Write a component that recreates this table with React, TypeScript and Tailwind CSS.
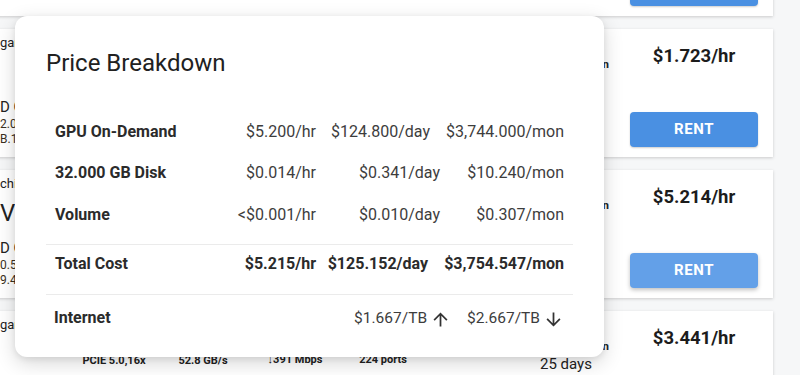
import React from "react";

type Stat = { label: string; value: string; high?: boolean };

type Offer = {
  id: string;
  host: string;
  title: string;
  titleIndent?: boolean;
  cpu: string;
  line4: string;
  line5: string;
  price: string;
  hover?: boolean;
  stats: Stat[];
  duration: string;
};

const OFFERS: Offer[] = [
  {
    id: "o1",
    host: "",
    title: "",
    cpu: "",
    line4: "",
    line5: "",
    price: "$0.412/hr",
    stats: [
      { label: "PCIE", value: "PCIE 4.0,16x" },
      { label: "Bandwidth", value: "24.6 GB/s" },
      { label: "Network", value: "↓812 Mbps", high: true },
      { label: "Ports", value: "96 ports", high: true },
    ],
    duration: "14 days",
  },
  {
    id: "o2",
    host: "garage-01",
    title: "2x RTX 3090",
    titleIndent: true,
    cpu: "D Cores",
    line4: "2.0 GB/s",
    line5: "B.1 TFLOPS",
    price: "$1.723/hr",
    stats: [
      { label: "PCIE", value: "PCIE 4.0,16x" },
      { label: "Bandwidth", value: "22.1 GB/s" },
      { label: "Network", value: "↓642 Mbps", high: true },
      { label: "Ports", value: "128 ports", high: true },
    ],
    duration: "30 days",
  },
  {
    id: "o3",
    host: "chicago-02",
    title: "V[H100 SXM]",
    cpu: "D Cores",
    line4: "0.5 GB/s",
    line5: "9.4 TFLOPS",
    price: "$5.214/hr",
    hover: true,
    stats: [
      { label: "PCIE", value: "PCIE 5.0,16x" },
      { label: "Bandwidth", value: "48.2 GB/s" },
      { label: "Network", value: "↓1204 Mbps", high: true },
      { label: "Ports", value: "512 ports", high: true },
    ],
    duration: "60 days",
  },
  {
    id: "o4",
    host: "garage-07",
    title: "",
    cpu: "",
    line4: "",
    line5: "",
    price: "$3.441/hr",
    stats: [
      { label: "PCIE", value: "PCIE 5.0,16x" },
      { label: "Bandwidth", value: "52.8 GB/s" },
      { label: "Network", value: "↓391 Mbps", high: true },
      { label: "Ports", value: "224 ports", high: true },
    ],
    duration: "25 days",
  },
];

const ROWS = [
  { label: "GPU On-Demand", hr: "$5.200/hr", day: "$124.800/day", mon: "$3,744.000/mon", h: "h-[41px]", wide: true },
  { label: "32.000 GB Disk", hr: "$0.014/hr", day: "$0.341/day", mon: "$10.240/mon", h: "h-[42px]", wide: false },
  { label: "Volume", hr: "<$0.001/hr", day: "$0.010/day", mon: "$0.307/mon", h: "h-[41px]", wide: false },
];

const STAT_WIDTHS = ["w-[100px]", "w-[78px]", "w-[106px]", "w-[70px]"];

function ArrowUp() {
  return (
    <svg viewBox="0 0 24 24" className="w-[21px] h-[21px] fill-[#333]">
      <path d="M4 12l1.41 1.41L11 7.83V20h2V7.83l5.58 5.59L20 12l-8-8-8 8z" />
    </svg>
  );
}

function ArrowDown() {
  return (
    <svg viewBox="0 0 24 24" className="w-[21px] h-[21px] fill-[#333]">
      <path d="M20 12l-1.41-1.41L13 16.17V4h-2v12.17l-5.58-5.59L4 12l8 8 8-8z" />
    </svg>
  );
}

function OfferCard({ offer }: { offer: Offer }) {
  return (
    <div className="h-[128px] shrink-0 bg-white shadow-[0_1px_3px_rgba(0,0,0,0.18)] flex text-[#222]">
      {/* machine info */}
      <div className="w-[80px] pl-[16px] flex flex-col whitespace-nowrap overflow-hidden">
        <div className="h-[28px] flex items-center text-[13px]">{offer.host}</div>
        <div className={`h-[30px] flex items-center text-[24px] leading-none ${offer.titleIndent ? "pl-[20px]" : ""}`}>
          {offer.title}
        </div>
        <div className="mt-[10px] h-[20px] flex items-center text-[15px]">{offer.cpu}</div>
        <div className="h-[14px] flex items-center text-[12px] text-[#3a3020]">{offer.line4}</div>
        <div className="h-[16px] flex items-center text-[12px] text-[#3a3020]">{offer.line5}</div>
      </div>

      {/* stats */}
      <div className="flex-1 flex">
        {offer.stats.map((s, i) => (
          <div
            key={s.label}
            className={`${STAT_WIDTHS[i]} flex flex-col items-center whitespace-nowrap ${s.high ? "pt-[27px]" : "pt-[28px]"}`}
          >
            <div className="h-[14px] text-[10.5px] font-bold text-[#555]">{s.label}</div>
            <div className="h-[16px] flex items-center text-[11px] font-bold">{s.value}</div>
          </div>
        ))}
        <div className="ml-[122px] flex flex-col pt-[28px] whitespace-nowrap">
          <div className="h-[14px] text-[11.5px] font-bold leading-[14px]">Max Duration</div>
          <div className="h-[22px] flex items-center text-[15px]">{offer.duration}</div>
        </div>
      </div>

      {/* price */}
      <div className="w-[158px] flex flex-col items-center pt-[16px]">
        <div className="h-[24px] flex items-center text-[18.5px] font-bold text-[#1c1c1c]">{offer.price}</div>
        <button
          className={`mt-[43px] w-[128px] h-[35px] rounded-[4px] text-white text-[15px] font-bold tracking-[0.04em] ${
            offer.hover
              ? "bg-[#63a0e8] shadow-[0_2px_4px_rgba(0,0,0,0.25)]"
              : "bg-[#4a90e2] shadow-[0_1px_2px_rgba(0,0,0,0.2)]"
          }`}
        >
          RENT
        </button>
      </div>
    </div>
  );
}

export default function App() {
  return (
    <div
      className="relative w-[800px] h-[375px] overflow-hidden bg-[#f6f7f8]"
      style={{ fontFamily: "Roboto, 'Liberation Sans', sans-serif" }}
    >
      {/* offer list behind the dialog */}
      <div className="flex flex-col gap-[13px] -mt-[112px] -ml-[16px] mr-[27px]">
        {OFFERS.map((o) => (
          <OfferCard key={o.id} offer={o} />
        ))}
      </div>

      {/* price breakdown dialog */}
      <div className="absolute left-[15px] top-[16px] w-[589px] h-[341px] rounded-[12px] bg-white shadow-[0_6px_20px_rgba(0,0,0,0.16),0_2px_6px_rgba(0,0,0,0.08)] px-[31px] pt-[31px]">
        <h2 className="text-[24px] leading-[32px] text-[#212121] font-normal">Price Breakdown</h2>

        <div className="mt-[32px] text-[16px] leading-[20px]">
          {ROWS.map((r) => (
            <div
              key={r.label}
              className={`${r.h} pl-[9px] grid grid-cols-[145px_116px_124px_124px] items-center text-[#3d3d3d]`}
            >
              <div className="font-bold text-[#2b2b2b]">{r.label}</div>
              <div className="text-right">{r.hr}</div>
              <div className={`text-right ${r.wide ? "pr-[10px]" : ""}`}>{r.day}</div>
              <div className="text-right">{r.mon}</div>
            </div>
          ))}

          <div className="mt-[9px] h-px bg-[#ebebeb]" />
          <div className="pt-[9px] pb-[20px] pl-[9px] grid grid-cols-[145px_116px_124px_124px] font-bold text-[#2b2b2b]">
            <div>Total Cost</div>
            <div className="text-right">$5.215/hr</div>
            <div className="text-right pr-[12px]">$125.152/day</div>
            <div className="text-right">$3,754.547/mon</div>
          </div>
          <div className="h-px bg-[#ebebeb]" />

          <div className="pt-[13px] pl-[8px] pr-[9px] flex items-center text-[#3d3d3d]">
            <div className="font-bold text-[#2b2b2b]">Internet</div>
            <div className="ml-auto flex items-center text-[15.5px]">
              <span>$1.667/TB</span>
              <span className="ml-[3px] -mb-[3px]">
                <ArrowUp />
              </span>
            </div>
            <div className="ml-[16px] flex items-center text-[15.5px]">
              <span>$2.667/TB</span>
              <span className="ml-[3px] -mb-[3px]">
                <ArrowDown />
              </span>
            </div>
          </div>
        </div>
      </div>
    </div>
  );
}
